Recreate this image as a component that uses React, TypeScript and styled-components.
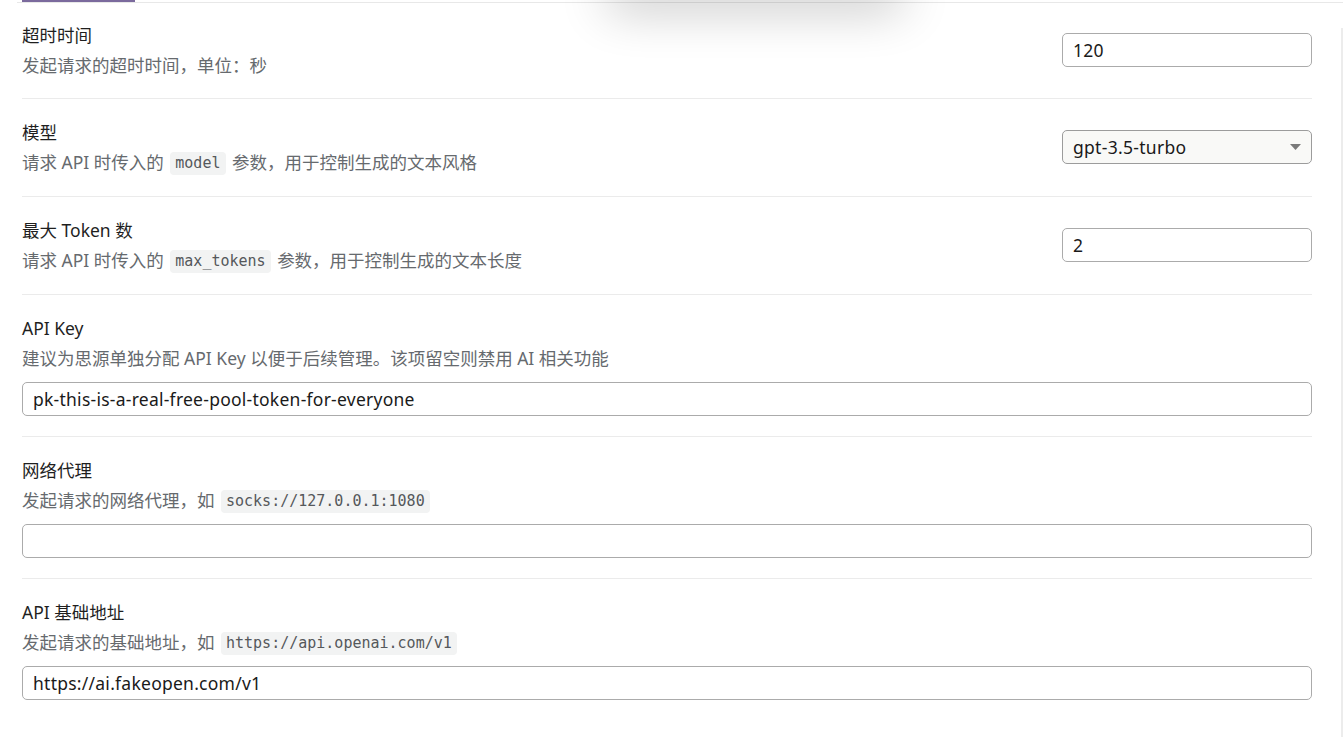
import React from "react";
import styled, { createGlobalStyle } from "styled-components";

const Global = createGlobalStyle`
  html, body { margin: 0; padding: 0; background: #fff; }
  body {
    font-family: "Noto Sans", "Noto Sans CJK SC", sans-serif;
    overflow: hidden;
  }
  * { box-sizing: border-box; }
`;

const Page = styled.div`
  position: relative;
  width: 1343px;
  height: 737px;
  overflow: hidden;
  background: #fff;
`;

const TabBar = styled.div`
  margin-left: 17px;
  height: 3px;
  border-bottom: 1px solid #e8e8e8;
  display: flex;
`;

const TabIndicator = styled.div`
  margin-left: 5px;
  width: 113px;
  height: 2px;
  background: #7b6a9d;
`;

const PopupShadow = styled.div`
  position: absolute;
  left: 605px;
  top: -34px;
  width: 300px;
  height: 32px;
  border-radius: 14px;
  background: #fff;
  box-shadow: 0 12px 48px rgba(0, 0, 0, 0.24);
`;

const ScrollEdge = styled.div`
  position: absolute;
  right: 0;
  top: 28px;
  bottom: 0;
  width: 2px;
  background: #ececec;
`;

const List = styled.div`
  padding: 0 31px 0 22px;
  display: flex;
  flex-direction: column;
`;

const Row = styled.div<{ $stack?: boolean; $first?: boolean; $last?: boolean }>`
  display: flex;
  flex-direction: ${(p) => (p.$stack ? "column" : "row")};
  align-items: ${(p) => (p.$stack ? "stretch" : "center")};
  gap: ${(p) => (p.$stack ? "9px" : "24px")};
  padding: ${(p) => (p.$first ? "17px 0 18px" : p.$stack ? "18px 0 20px" : "18px 0 19px")};
  border-bottom: ${(p) => (p.$last ? "none" : "1px solid #ebebeb")};
`;

const TextBlock = styled.div`
  flex: 1;
  min-width: 0;
  display: flex;
  flex-direction: column;
`;

const Title = styled.div`
  font-size: 17.5px;
  line-height: 30px;
  color: #1f1f1f;
`;

const Desc = styled.div`
  font-size: 17.5px;
  line-height: 30px;
  color: #666a6e;
  white-space: nowrap;
`;

const Code = styled.code`
  display: inline-block;
  font-family: "DejaVu Sans Mono", "Liberation Mono", monospace;
  font-size: 15px;
  line-height: 23px;
  padding: 0 5.5px;
  margin: 0 6px;
  border-radius: 4px;
  background: #f2f3f3;
  color: #55585b;
  vertical-align: 1px;
`;

const TextInput = styled.input<{ $full?: boolean }>`
  width: ${(p) => (p.$full ? "100%" : "250px")};
  flex: none;
  height: 34px;
  padding: 0 10px;
  border: 1px solid #ababab;
  border-radius: 5px;
  background: #fff;
  font-family: "Noto Sans", "Noto Sans CJK SC", sans-serif;
  font-size: 17.5px;
  letter-spacing: 0.25px;
  color: #1a1a1a;
  outline: none;
`;

const SelectBox = styled.div`
  position: relative;
  width: 250px;
  flex: none;
  height: 34px;
  padding: 0 10px;
  border: 1px solid #9c9c9c;
  border-radius: 5px;
  background: #f9f9f7;
  display: flex;
  align-items: center;
  font-size: 17.5px;
  letter-spacing: 0.3px;
  color: #1a1a1a;
`;

const Arrow = styled.svg`
  position: absolute;
  right: 10px;
  top: 13px;
`;

type Item = {
  title: string;
  desc: React.ReactNode;
  control: "input" | "select" | "full";
  value: string;
};

const items: Item[] = [
  { title: "超时时间", desc: "发起请求的超时时间，单位：秒", control: "input", value: "120" },
  {
    title: "模型",
    desc: (
      <>
        请求 API 时传入的<Code>model</Code>参数，用于控制生成的文本风格
      </>
    ),
    control: "select",
    value: "gpt-3.5-turbo",
  },
  {
    title: "最大 Token 数",
    desc: (
      <>
        请求 API 时传入的<Code>max_tokens</Code>参数，用于控制生成的文本长度
      </>
    ),
    control: "input",
    value: "2",
  },
  {
    title: "API Key",
    desc: "建议为思源单独分配 API Key 以便于后续管理。该项留空则禁用 AI 相关功能",
    control: "full",
    value: "pk-this-is-a-real-free-pool-token-for-everyone",
  },
  {
    title: "网络代理",
    desc: (
      <>
        发起请求的网络代理，如<Code>socks://127.0.0.1:1080</Code>
      </>
    ),
    control: "full",
    value: "",
  },
  {
    title: "API 基础地址",
    desc: (
      <>
        发起请求的基础地址，如<Code>https://api.openai.com/v1</Code>
      </>
    ),
    control: "full",
    value: "https://ai.fakeopen.com/v1",
  },
];

export default function App() {
  return (
    <Page>
      <Global />
      <TabBar>
        <TabIndicator />
      </TabBar>
      <List>
        {items.map((it, i) => {
          const stack = it.control === "full";
          return (
            <Row key={i} $stack={stack} $first={i === 0} $last={i === items.length - 1}>
              <TextBlock>
                <Title>{it.title}</Title>
                <Desc>{it.desc}</Desc>
              </TextBlock>
              {it.control === "select" ? (
                <SelectBox>
                  {it.value}
                  <Arrow width="11" height="6" viewBox="0 0 11 6">
                    <path d="M0 0 L11 0 L5.5 6 Z" fill="#7a7a7a" />
                  </Arrow>
                </SelectBox>
              ) : (
                <TextInput $full={stack} defaultValue={it.value} readOnly />
              )}
            </Row>
          );
        })}
      </List>
      <PopupShadow />
      <ScrollEdge />
    </Page>
  );
}
